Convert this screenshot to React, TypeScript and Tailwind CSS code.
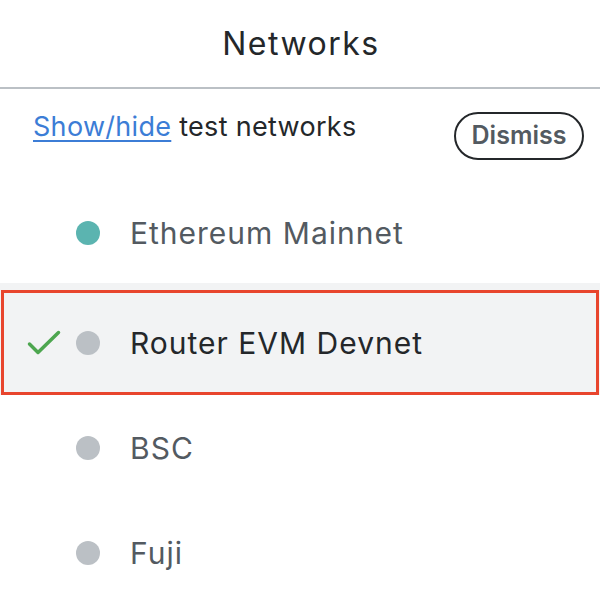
import React from 'react';

type Net = { name: string; dot: string; selected: boolean; h: string };

const networks: Net[] = [
  { name: 'Ethereum Mainnet', dot: 'bg-[#5bb4b0]', selected: false, h: 'h-[97px] pb-[3px]' },
  { name: 'Router EVM Devnet', dot: 'bg-[#bbc0c5]', selected: true, h: '' },
  { name: 'BSC', dot: 'bg-[#bbc0c5]', selected: false, h: 'h-[106px]' },
  { name: 'Fuji', dot: 'bg-[#bbc0c5]', selected: false, h: 'h-[104px]' },
];

function Check() {
  return (
    <svg width="34" height="26" viewBox="0 0 34 26" fill="none">
      <path d="M2.5 14 L11 22.5 L31.5 2.5" stroke="#4da64f" strokeWidth="3.5" strokeLinecap="round" strokeLinejoin="round" />
    </svg>
  );
}

function Row({ name, dot, selected }: Net) {
  return (
    <div className="flex items-center h-full">
      {/* selected row sits inside a 3px frame, so its gutter is 4px narrower */}
      <div className={`${selected ? 'w-[72px] pl-[23px]' : 'w-[76px]'} flex`}>
        {selected && <Check />}
      </div>
      <div className={`w-6 h-6 rounded-full ${dot}`} />
      <span
        className={`ml-[30px] text-[30px] leading-none tracking-[1px] ${selected ? 'text-[#24272a]' : 'text-[#535a61]'}`}
      >
        {name}
      </span>
    </div>
  );
}

export default function App() {
  return (
    <div className="w-[600px] h-[610px] bg-white overflow-hidden font-['Inter',sans-serif]">
      {/* Header */}
      <div className="h-[89px] flex items-center justify-center border-b-2 border-[#bbc0c5]">
        <h1 className="text-[32px] text-[#24272a] tracking-[1.5px] pl-[2px]">Networks</h1>
      </div>

      {/* Test networks notice */}
      <div className="h-[97px] flex justify-between items-start pl-[33px] pr-[16px]">
        <p className="mt-[23px] text-[27px] leading-[30px] tracking-[0.3px] text-[#24272a]">
          <a className="text-[#3c7dd6] underline underline-offset-[4px] decoration-2">Show/hide</a> test networks
        </p>
        <button className="mt-[23px] h-[48px] w-[130px] rounded-full border-2 border-[#24272a] text-[25px] font-semibold text-[#535a61]">
          Dismiss
        </button>
      </div>

      {/* Network list */}
      {networks.map((n) =>
        n.selected ? (
          <div key={n.name} className="bg-[#f2f3f4] pt-[7px]">
            <div className="mx-[1px] h-[105px] border-[3px] border-[#e8452d]">
              <Row {...n} />
            </div>
          </div>
        ) : (
          <div key={n.name} className={n.h}>
            <Row {...n} />
          </div>
        )
      )}
    </div>
  );
}
